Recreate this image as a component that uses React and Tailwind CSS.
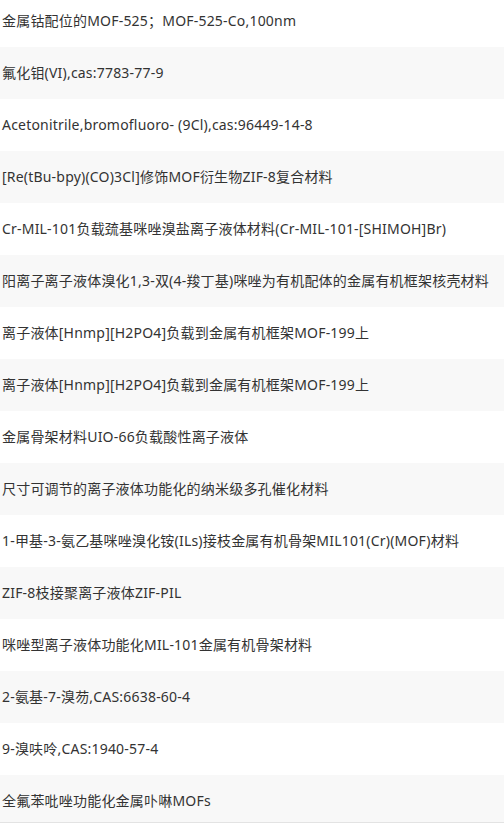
export default function App() {
  const items = [
    "金属钴配位的MOF-525；MOF-525-Co,100nm",
    "氟化钼(VI),cas:7783-77-9",
    "Acetonitrile,bromofluoro- (9Cl),cas:96449-14-8",
    "[Re(tBu-bpy)(CO)3Cl]修饰MOF衍生物ZIF-8复合材料",
    "Cr-MIL-101负载巯基咪唑溴盐离子液体材料(Cr-MIL-101-[SHIMOH]Br)",
    "阳离子离子液体溴化1,3-双(4-羧丁基)咪唑为有机配体的金属有机框架核壳材料",
    "离子液体[Hnmp][H2PO4]负载到金属有机框架MOF-199上",
    "离子液体[Hnmp][H2PO4]负载到金属有机框架MOF-199上",
    "金属骨架材料UIO-66负载酸性离子液体",
    "尺寸可调节的离子液体功能化的纳米级多孔催化材料",
    "1-甲基-3-氨乙基咪唑溴化铵(ILs)接枝金属有机骨架MIL101(Cr)(MOF)材料",
    "ZIF-8枝接聚离子液体ZIF-PIL",
    "咪唑型离子液体功能化MIL-101金属有机骨架材料",
    "2-氨基-7-溴芴,CAS:6638-60-4",
    "9-溴呋呤,CAS:1940-57-4",
    "全氟苯吡唑功能化金属卟啉MOFs",
  ];
  return (
    <div
      className="w-[504px] h-[836px] overflow-hidden bg-white text-[14px] text-[#333] tracking-[0.2px]"
      style={{ fontFamily: '"Noto Sans", "Noto Sans CJK SC", sans-serif' }}
    >
      <div className="-mt-[5px]">
        {items.map((t, i) => {
          const last = i === items.length - 1;
          return (
            <div
              key={i}
              className={
                (i % 2 === 1 ? "bg-[#f8f8f8] " : "bg-white ") +
                (last
                  ? "h-[48px] overflow-hidden border-b border-[#e3e3e3] "
                  : "h-[52px] ") +
                "pl-[2px] leading-[52px] whitespace-nowrap"
              }
            >
              {t}
            </div>
          );
        })}
      </div>
    </div>
  );
}
